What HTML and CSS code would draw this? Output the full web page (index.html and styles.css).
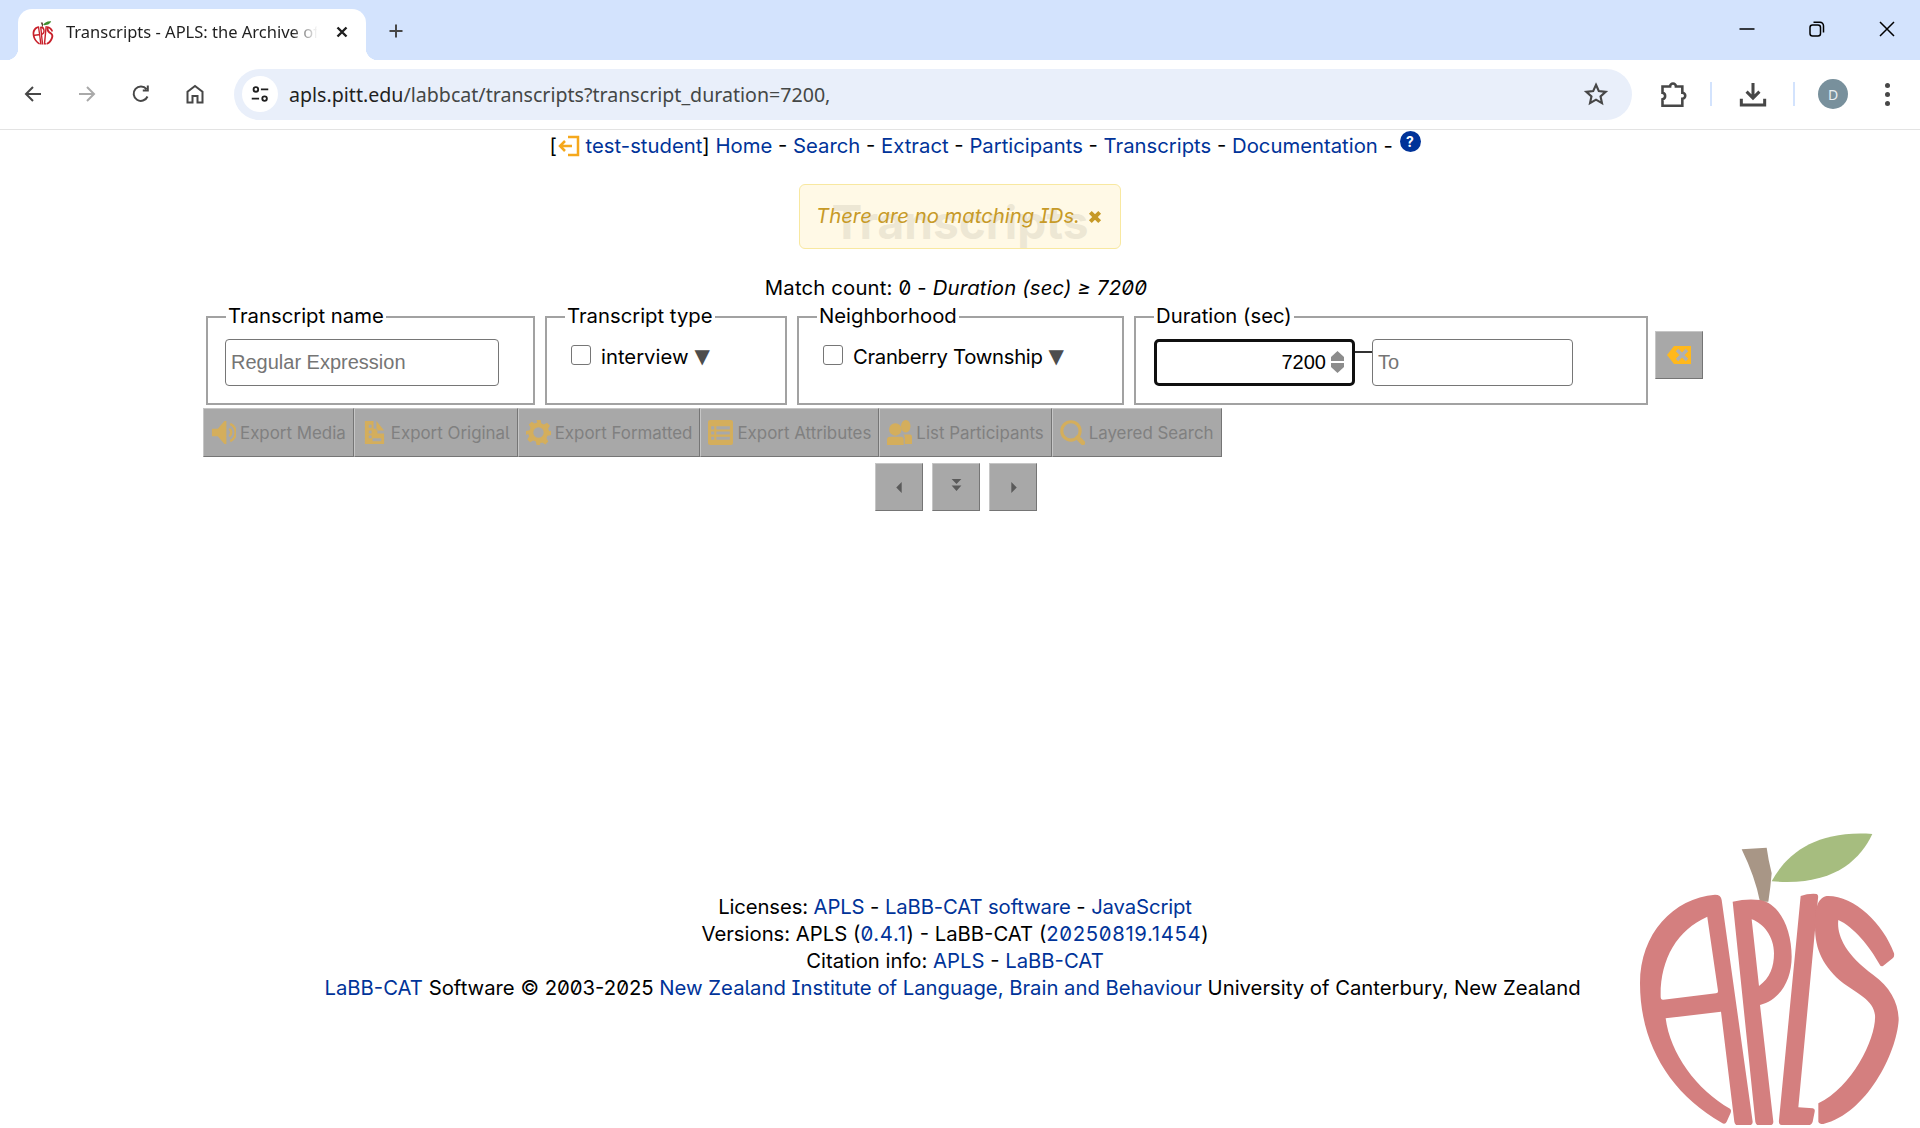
FILE: index.html
```html
<!DOCTYPE html>
<html lang="en">
<head>
<meta charset="utf-8">
<title>Transcripts - APLS: the Archive of Pittsburgh Language and Speech</title>
<link rel="stylesheet" href="styles.css">
</head>
<body>
<svg class="defs" width="0" height="0" aria-hidden="true">
  <symbol id="apls" viewBox="0 0 900 924">
    <path class="leaf" d="M455 184C500 100 590 30 757 42C720 120 640 200 455 184Z"/>
    <path class="stem" d="M365 88L440 83Q445 120 455 160Q452 200 445 245L420 245Q405 170 365 88Z"/>
    <path class="letters" fill-rule="evenodd" d="M285 224Q303 224 305 240L398 905Q398 915 388 915L352 915Q345 915 343 905L303 575L137 595C150 700 230 810 330 866Q335 870 332 878L320 905Q315 915 305 908C150 820 60 670 60 490C60 340 160 235 285 224ZM262 290C170 330 120 420 122 530Q122 540 130 539L288 520Q295 519 294 512L262 292Z"/>
    <path class="letters" fill-rule="evenodd" d="M338 245Q380 235 420 240C480 250 515 330 515 410C515 480 480 540 420 555L460 905Q460 915 450 915L415 915Q408 915 406 905ZM395 298L417 498C450 475 462 440 462 400C462 350 430 310 395 298Z"/>
    <path class="letters" d="M542 228Q565 220 590 222Q596 224 594 235L535 862L578 865Q586 866 584 875L578 905Q575 915 565 915L485 915Q475 915 477 900Z"/>
    <path class="letters" d="M620 228C700 225 790 310 822 400Q824 410 818 415L790 437Q782 442 778 432C750 380 700 320 655 300C650 340 670 400 760 465C810 500 836 550 836 600C830 700 740 880 610 912Q597 912 595 905L595 850C700 800 770 650 765 585C760 540 710 520 670 490C610 440 585 390 585 320C585 270 590 235 620 228Z"/>
  </symbol>
</svg>

<header class="browser">
  <div class="tabstrip">
    <div class="tab">
      <svg class="favicon"><use href="#apls"/></svg>
      <span class="tab-title">Transcripts - APLS: the Archive of Pittsburgh</span>
      <svg class="tab-close" viewBox="0 0 16 16"><path d="M3.500 3.500l9 9M12.500 3.500l-9 9"/></svg>
    </div>
    <svg class="new-tab" viewBox="0 0 16 16"><path d="M8 1.500v13M1.500 8h13"/></svg>
    <div class="window-controls">
      <svg viewBox="0 0 16 16"><path d="M.5 8h15"/></svg>
      <svg viewBox="0 0 16 16"><rect x="1" y="4" width="10.500" height="11" rx="2.500"/><path d="M4.500 1.200h6.500a3.500 3.500 0 0 1 3.500 3.500v6.800"/></svg>
      <svg viewBox="0 0 16 16"><path d="M1 1l14 14M15 1L1 15"/></svg>
    </div>
  </div>
  <div class="toolbar">
    <svg class="tool back" viewBox="0 0 24 24"><path d="M20 12H5M12 5l-7 7 7 7"/></svg>
    <svg class="tool forward" viewBox="0 0 24 24"><path d="M4 12h15M12 5l7 7-7 7"/></svg>
    <svg class="tool reload" viewBox="0 0 24 24"><path d="M18.500 14.500A7.200 7.200 0 1 1 17.500 7.200M18.800 3.500v5h-5"/></svg>
    <svg class="tool home" viewBox="0 0 24 24"><path d="M4.500 20.500V9.800L12 4l7.500 5.800v10.700h-5v-6.500h-5v6.500z"/></svg>
    <div class="omnibox">
      <span class="site-chip">
        <svg viewBox="0 0 24 24"><circle cx="7.500" cy="7" r="2.500"/><path d="M13 7h8M3 17h8"/><circle cx="17" cy="17" r="2.500"/></svg>
      </span>
      <span class="url"><b>apls.pitt.edu</b>/labbcat/transcripts?transcript_duration=7200,</span>
      <svg class="star" viewBox="0 0 24 24"><path d="M12 3.500l2.600 5.800 6.300.7-4.700 4.200 1.300 6.200-5.500-3.200-5.500 3.200 1.300-6.200L3.100 10l6.300-.7z"/></svg>
    </div>
    <svg class="tool puzzle" viewBox="0 0 24 24"><path d="M3 5.500h6.500a2.500 2.500 0 0 1 5 0H20v5.500a2.500 2.500 0 0 1 0 5V22H3v-5.500a2.800 2.800 0 0 0 0-5.500z"/></svg>
    <span class="tool-sep"></span>
    <svg class="tool download" viewBox="0 0 24 24"><path d="M12 2.500v13M6.500 10l5.500 5.500 5.500-5.500M2 16v5.500h20V16"/></svg>
    <span class="tool-sep sep-second"></span>
    <span class="avatar">D</span>
    <span class="kebab"><i></i><i></i><i></i></span>
  </div>
</header>

<main class="page">
  <nav class="site-nav">[<svg class="logout" viewBox="0 0 24 24"><path d="M11 3h10v18H11M3 12h12M8 7l-5 5 5 5"/></svg> <a href="#">test-student</a>] <a href="#">Home</a> - <a href="#">Search</a> - <a href="#">Extract</a> - <a href="#">Participants</a> - <a href="#">Transcripts</a> - <a href="#">Documentation</a> - <a class="help" href="#">?</a></nav>

  <section class="title-area">
    <h1>Transcripts</h1>
    <div class="message">There are no matching IDs. <svg viewBox="0 0 12 12"><path d="M2 2l8 8M10 2l-8 8"/></svg></div>
  </section>

  <p class="match-count">Match count: 0 - <em>Duration (sec) ≥ 7200</em></p>

  <form class="filters">
    <fieldset class="fs-name">
      <legend>Transcript name</legend>
      <input class="text-input name-input" type="text" placeholder="Regular Expression">
    </fieldset>
    <fieldset class="fs-type">
      <legend>Transcript type</legend>
      <label class="option"><input type="checkbox"><span>interview</span><span class="tri">▼</span></label>
    </fieldset>
    <fieldset class="fs-hood">
      <legend>Neighborhood</legend>
      <label class="option"><input type="checkbox"><span class="tight">Cranberry Township</span><span class="tri">▼</span></label>
    </fieldset>
    <fieldset class="fs-duration">
      <legend>Duration (sec)</legend>
      <div class="range">
        <span class="from-wrap">
          <input class="text-input from-input" type="text" value="7200">
          <span class="spin"><i class="up"></i><i class="down"></i></span>
        </span>
        <span class="range-dash"></span>
        <input class="text-input to-input" type="text" placeholder="To">
      </div>
    </fieldset>
    <button class="btn clear-btn" type="button" aria-label="Clear">
      <svg viewBox="0 0 24 18"><path class="gold-strong" d="M7 0h17v18H7L0 9z"/><path class="x" d="M10 4l10 10M20 4L10 14"/></svg>
    </button>
  </form>

  <div class="actions">
    <button class="btn action" type="button">
      <svg viewBox="0 0 24 26"><path class="gold" d="M0 9h6l7-8h2v24h-2l-7-8H0z"/><path class="gold-line" d="M18 9a5 5 0 0 1 0 8M19 4a10 10 0 0 1 0 18"/></svg>
      Export Media
    </button>
    <button class="btn action" type="button">
      <svg viewBox="0 0 24 26"><path class="gold" fill-rule="evenodd" d="M2 1h9v8h4v5h7v11H2zM6 5v3h3V5zM6 11v3h3v-3zM6 16v3h3v-3zM10 19v3h9v-3zM14 1l8 10h-8z"/></svg>
      Export Original
    </button>
    <button class="btn action" type="button">
      <svg viewBox="0 0 24 24"><path class="gold" fill-rule="evenodd" d="M10 0h4l.8 3.400 2.400 1 3-1.800 2.800 2.800-1.800 3 1 2.400L24 10.600v3.800l-3.400.8-1 2.400 1.800 3-2.800 2.800-3-1.800-2.400 1L13.800 24h-3.600l-.8-3.400-2.400-1-3 1.800-2.800-2.800 1.800-3-1-2.400L0 14.400v-3.800l3.400-.8 1-2.400-1.800-3 2.800-2.800 3 1.800 2.400-1zM12 7a5 5 0 1 0 0 10 5 5 0 0 0 0-10z"/></svg>
      Export Formatted
    </button>
    <button class="btn action" type="button">
      <svg viewBox="0 0 24 24"><path class="gold" fill-rule="evenodd" d="M2 0h20a2 2 0 0 1 2 2v20a2 2 0 0 1-2 2H2a2 2 0 0 1-2-2V2a2 2 0 0 1 2-2zM3 6v3h3V6zM8 6v3h13V6zM3 11v3h3v-3zM8 11v3h13v-3zM3 16v3h3v-3zM8 16v3h13v-3z"/></svg>
      Export Attributes
    </button>
    <button class="btn action" type="button">
      <svg viewBox="0 0 24 24"><circle class="gold" cx="8" cy="9" r="6"/><ellipse class="gold" cx="18" cy="6" rx="4.500" ry="6"/><path class="gold" d="M0 24v-5q0-3 3-3h10q3 0 3 3v5zM17 23v-6q0-3-2-3h7q2 0 2 3v6z"/></svg>
      List Participants
    </button>
    <button class="btn action" type="button">
      <svg viewBox="0 0 24 24"><circle class="gold-ring" cx="10.500" cy="10.500" r="8.800"/><path class="gold-handle" d="M17 17l5 5"/></svg>
      Layered Search
    </button>
  </div>

  <div class="pager">
    <button class="btn page-btn" type="button" aria-label="Previous"><svg viewBox="0 0 12 12"><path d="M8 1v10L3 6z"/></svg></button>
    <button class="btn page-btn raised" type="button" aria-label="All"><svg viewBox="0 0 12 12"><path d="M1.500 0h9L6 4.500zM1.500 6h9L6 11z"/></svg></button>
    <button class="btn page-btn" type="button" aria-label="Next"><svg viewBox="0 0 12 12"><path d="M4 1v10l5-5z"/></svg></button>
  </div>

  <footer class="site-footer">
    <div class="footer-first">Licenses: <a href="#">APLS</a> - <a href="#">LaBB-CAT software</a> - <a href="#">JavaScript</a></div>
    <div>Versions: APLS (<a class="num" href="#">0.4.1</a>) - LaBB-CAT (<a class="num" href="#">20250819.1454</a>)</div>
    <div>Citation info: <a href="#">APLS</a> - <a href="#">LaBB-CAT</a></div>
    <div class="footer-last"><a href="#">LaBB-CAT</a> Software © 2003-2025 <a href="#">New Zealand Institute of Language, Brain and Behaviour</a> University of Canterbury, New Zealand</div>
  </footer>

  <svg class="logo"><use href="#apls"/></svg>
</main>
</body>
</html>
```
FILE: styles.css
```css
* { box-sizing: border-box; }
html, body { margin: 0; height: 100%; }
body {
  position: relative;
  width: 1920px;
  height: 1128px;
  overflow: hidden;
  background: #fff;
  color: #000;
  font: 20.300px/27px Inter, "Liberation Sans", sans-serif;
  font-feature-settings: "zero", "ss02", "cv08";
}
a { color: #003399; text-decoration: none; }
.defs { position: absolute; }
.letters { fill: var(--apple); }
.leaf { fill: var(--leaf); }
.stem { fill: var(--stem); }

/* browser chrome */
.browser { font-family: "Noto Sans", sans-serif; font-feature-settings: normal; }
.tabstrip {
  position: relative;
  display: flex;
  align-items: flex-end;
  height: 60px;
  background: #d3e3fd;
}
.tab {
  position: relative;
  display: flex;
  align-items: center;
  width: 348px;
  height: 51px;
  margin-left: 18px;
  padding: 0 16px 5px 13px;
  background: #fff;
  border-radius: 14px 14px 0 0;
}
.tab::before, .tab::after {
  content: "";
  position: absolute;
  bottom: 0;
  width: 12px;
  height: 12px;
}
.tab::before { left: -12px; background: radial-gradient(circle at 0 0, transparent 12px, #fff 12.500px); }
.tab::after { right: -12px; background: radial-gradient(circle at 100% 0, transparent 12px, #fff 12.500px); }
.favicon { width: 24px; height: 25px; flex: none; --apple: #c8202a; --leaf: #3f8f2f; --stem: #5c4030; }
.tab-title {
  flex: 1;
  margin-left: 11px;
  overflow: hidden;
  white-space: nowrap;
  font-size: 16.500px;
  line-height: 24px;
  color: #1f1f1f;
  -webkit-mask-image: linear-gradient(to right, #000 86%, transparent 96%);
  mask-image: linear-gradient(to right, #000 86%, transparent 96%);
}
.tab-close { width: 16px; height: 16px; margin-left: 6px; flex: none; fill: none; stroke: #1f1f1f; stroke-width: 2.400; }
.new-tab { width: 16px; height: 16px; margin: 0 0 21px 22px; fill: none; stroke: #474747; stroke-width: 2; }
.window-controls {
  display: flex;
  gap: 54px;
  margin-left: auto;
  padding: 0 25px 23px 0;
}
.window-controls svg { width: 16px; height: 16px; fill: none; stroke: #000; stroke-width: 1.500; }
.toolbar {
  display: flex;
  align-items: center;
  height: 70px;
  padding: 0 0 1px 0;
  background: #fff;
  border-bottom: 1px solid #e3e3e3;
}
.tool { width: 24px; height: 24px; flex: none; fill: none; stroke: #474747; stroke-width: 2; }
.back { margin-left: 21px; }
.forward { margin-left: 30px; stroke: #a9a9a9; }
.reload { margin-left: 30px; }
.home { margin-left: 30px; }
.omnibox {
  display: flex;
  align-items: center;
  width: 1398px;
  height: 51px;
  margin-left: 27px;
  padding: 0 23px 0 8px;
  background: #e9effa;
  border-radius: 26px;
}
.site-chip {
  display: flex;
  align-items: center;
  justify-content: center;
  width: 36px;
  height: 36px;
  background: #fff;
  border-radius: 50%;
  flex: none;
}
.site-chip svg { width: 22px; height: 22px; fill: none; stroke: #1f1f1f; stroke-width: 2; }
.url {
  flex: 1;
  margin-left: 11px;
  font-size: 19.600px;
  white-space: nowrap;
  color: #444746;
}
.url b { font-weight: 400; color: #1f1f1f; }
.star { width: 26px; height: 26px; fill: none; stroke: #474747; stroke-width: 2; }
.puzzle { width: 28px; height: 28px; margin-left: 27px; stroke-width: 2.200; }
.tool-sep { width: 2px; height: 24px; margin-left: 23px; background: #d3e3fd; flex: none; }
.download { width: 28px; height: 28px; margin-left: 27px; stroke-width: 2.600; }
.sep-second { margin-left: 26px; }
.avatar {
  display: flex;
  align-items: center;
  justify-content: center;
  width: 30px;
  height: 30px;
  margin-left: 23px;
  border-radius: 50%;
  background: #78909c;
  color: #e8eef2;
  font-size: 14px;
}
.kebab { display: flex; flex-direction: column; gap: 4px; margin-left: 37px; }
.kebab i { width: 5px; height: 5px; border-radius: 50%; background: #474747; }

/* page */
.page { display: flex; flex-direction: column; height: 998px; }
.site-nav {
  height: 27px;
  margin-top: 1px;
  margin-bottom: 1px;
  padding-left: 50px;
  text-align: center;
  white-space: nowrap;
}
.logout { width: 24px; height: 24px; margin: 0 -1px -5px 0; fill: none; stroke: #f5a81c; stroke-width: 2.500; }
.help {
  display: inline-flex;
  align-items: center;
  justify-content: center;
  width: 21px;
  height: 21px;
  margin-left: 1px;
  vertical-align: 6px;
  border-radius: 50%;
  background: #003399;
  color: #fff;
  font-size: 14px;
  font-weight: 700;
}
.title-area { position: relative; height: 115px; }
h1 {
  margin: 0;
  padding-top: 38px;
  text-align: center;
  font-size: 46px;
  line-height: 50px;
  font-weight: 700;
  color: #bdbdbd;
}
.message {
  position: absolute;
  top: 25px;
  left: 799px;
  display: flex;
  align-items: center;
  justify-content: center;
  gap: 8px;
  width: 322px;
  height: 65px;
  padding: 0 2px 3px 0;
  background: rgba(255, 247, 220, .72);
  border: 1px solid #f8e8a0;
  border-radius: 6px;
  color: #c79a27;
  font-style: italic;
  white-space: nowrap;
}
.message svg { width: 14px; height: 14px; margin-top: 4px; fill: none; stroke: #c79a27; stroke-width: 3.400; }
.match-count { margin: 0; padding-right: 8px; text-align: center; height: 27px; letter-spacing: .18px; }

.filters {
  display: flex;
  align-items: flex-start;
  gap: 10px;
  margin: 1px 0 0 206px;
}
fieldset {
  flex: none;
  height: 103px;
  min-width: 0;
  margin: 0;
  padding: 8px 17px 0;
  border: 2px solid #a2a2a2;
}
legend { padding: 0 2px 2px; margin-left: 1px; line-height: 27px; }
.fs-name { width: 329px; }
.fs-type { width: 242px; }
.fs-hood { width: 327px; }
.fs-duration { width: 514px; }
.text-input {
  height: 47px;
  padding: 0 5px;
  border: 1px solid #767676;
  border-radius: 4px;
  background: #fff;
  color: #000;
  font: 20px "Liberation Sans", sans-serif;
  font-feature-settings: normal;
}
.text-input::placeholder { color: #757575; }
.name-input { width: 274px; display: block; }
.option { display: flex; align-items: center; height: 27px; margin: 4px 0 0 7px; }
.option input {
  width: 20px;
  height: 20px;
  margin: -4px 10px 0 0;
  appearance: none;
  background: #fff;
  border: 1px solid #767676;
  border-radius: 3px;
}
.tight { letter-spacing: -.3px; }
.tri { margin-left: 6px; margin-top: -2px; color: #4d4d4d; font: 20px "DejaVu Sans", sans-serif; }
.range { display: flex; align-items: flex-start; margin-left: 1px; }
.from-wrap { position: relative; display: block; }
.from-input { width: 201px; padding-right: 26px; text-align: right; border: 3px solid #101010; border-radius: 5px; display: block; }
.spin {
  position: absolute;
  top: 12px;
  right: 11px;
  display: flex;
  flex-direction: column;
  gap: 2px;
}
.spin i { width: 13px; height: 10px; background: #8c8c8c; }
.spin .up { clip-path: polygon(50% 0, 100% 60%, 100% 100%, 0 100%, 0 60%); }
.spin .down { clip-path: polygon(0 0, 100% 0, 100% 40%, 50% 100%, 0 40%); }
.range-dash { width: 17px; height: 2px; margin-top: 12px; background: #333; flex: none; }
.to-input { width: 201px; }

.btn {
  display: inline-flex;
  align-items: center;
  justify-content: center;
  padding: 0;
  background: #a8a8a8;
  border: 1px solid #c6c6c6;
  border-right-color: #757575;
  border-bottom-color: #757575;
  font-family: Inter, sans-serif;
  font-feature-settings: "zero", "ss02", "cv08";
  color: #808080;
}
.clear-btn { width: 48px; height: 48px; margin: 29px 0 0 -3px; }
.clear-btn svg { width: 24px; height: 18px; margin-bottom: 0; }
.gold-strong { fill: #ffb81c; }
.x { fill: none; stroke: #b0b0b0; stroke-width: 3.500; }
.actions { display: flex; height: 49px; margin: 3px 0 0 203px; }
.action { gap: 4px; padding: 0 7px; font-size: 16.900px; white-space: nowrap; }
.action svg { width: 25px; height: 25px; flex: none; }
.gold { fill: #d4ae5c; }
.gold-line { fill: none; stroke: #d4ae5c; stroke-width: 2.500; }
.gold-ring { fill: none; stroke: #d4ae5c; stroke-width: 3; }
.gold-handle { fill: none; stroke: #d4ae5c; stroke-width: 4.500; stroke-linecap: round; }
.pager { display: flex; justify-content: center; gap: 9px; height: 48px; margin-top: 6px; padding-right: 8px; }
.page-btn { width: 48px; height: 48px; padding-top: 1px; }
.page-btn svg { width: 13px; height: 13px; fill: #5a5a5a; }
.page-btn.raised svg { margin-bottom: 4px; }
.site-footer {
  margin-top: auto;
  margin-bottom: 127px;
  padding-right: 10px;
  text-align: center;
  white-space: nowrap;
}
.num { letter-spacing: .65px; }
.footer-first { letter-spacing: -.12px; }
.footer-last { padding-right: 5px; }
.logo {
  position: absolute;
  right: 0;
  bottom: 0;
  width: 300px;
  height: 308px;
  --apple: #d47f7f;
  --leaf: #a6bd7f;
  --stem: #a89686;
}
```
